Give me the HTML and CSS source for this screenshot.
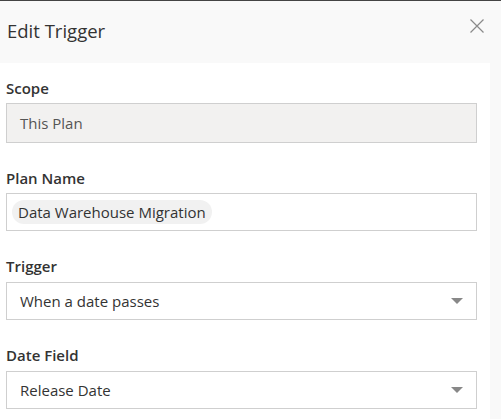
FILE: index.html
```html
<!DOCTYPE html>
<html>
<head>
<meta charset="utf-8">
<link rel="stylesheet" href="styles.css">
</head>
<body>
<div class="dialog">
  <div class="header">
    <h1 class="title">Edit Trigger</h1>
    <button class="close" aria-label="Close">
      <svg width="14" height="14" viewBox="0 0 14 14"><path d="M0.5 0.5L13.5 13.5M13.5 0.5L0.5 13.5" stroke="#8a8a8a" stroke-width="1.2" fill="none"/></svg>
    </button>
  </div>
  <div class="panel">
    <div class="field">
      <div class="label">Scope</div>
      <div class="box box-disabled">This Plan</div>
    </div>
    <div class="field">
      <div class="label">Plan Name</div>
      <div class="box box-chips"><span class="chip">Data Warehouse Migration</span></div>
    </div>
    <div class="field">
      <div class="label label-select">Trigger</div>
      <div class="box box-select"><span>When a date passes</span><span class="caret"></span></div>
    </div>
    <div class="field">
      <div class="label label-select">Date Field</div>
      <div class="box box-select"><span>Release Date</span><span class="caret"></span></div>
    </div>
  </div>
</div>
</body>
</html>
```
FILE: styles.css
```css
html, body {
  margin: 0;
  padding: 0;
  height: 100%;
}
body {
  background: #f9f9f9;
  font-family: "Open Sans", "Noto Sans", sans-serif;
  color: #333;
  border-top: 1px solid #444;
  box-sizing: border-box;
  overflow: hidden;
}
.dialog {
  display: flex;
  flex-direction: column;
  height: 100%;
}
.header {
  height: 62px;
  display: flex;
  align-items: flex-start;
  justify-content: space-between;
  padding: 0 17px 0 7px;
  box-sizing: border-box;
}
.title {
  margin: 0;
  padding-top: 17px;
  font-size: 18.5px;
  font-weight: 400;
  line-height: 26px;
  color: #333;
}
.close {
  margin-top: 18px;
  padding: 0;
  border: 0;
  background: transparent;
  width: 14px;
  height: 14px;
  display: flex;
}
.panel {
  flex: 1;
  background: #fff;
  width: 490px;
  box-sizing: border-box;
  padding: 15px 13px 0 6px;
  display: flex;
  flex-direction: column;
  gap: 25px;
}
.label {
  font-size: 15px;
  font-weight: 600;
  line-height: 20px;
  margin-bottom: 5px;
  color: #333;
}
.label-select {
  margin-bottom: 6px;
}
.box {
  border: 1px solid #cfcfcf;
  height: 38px;
  box-sizing: border-box;
  display: flex;
  align-items: center;
  font-size: 15px;
  color: #333;
  padding: 0 13px;
}
.box-disabled {
  height: 40px;
  background: #f2f1f0;
  color: #555;
}
.box-chips {
  padding: 0 5px;
}
.chip {
  background: #f1f1f1;
  border-radius: 12px;
  height: 24px;
  line-height: 24px;
  padding: 0 6px;
}
.box-select {
  justify-content: space-between;
}
.caret {
  width: 0;
  height: 0;
  border-left: 6px solid transparent;
  border-right: 6px solid transparent;
  border-top: 6px solid #888;
  margin-right: 0;
}
```
